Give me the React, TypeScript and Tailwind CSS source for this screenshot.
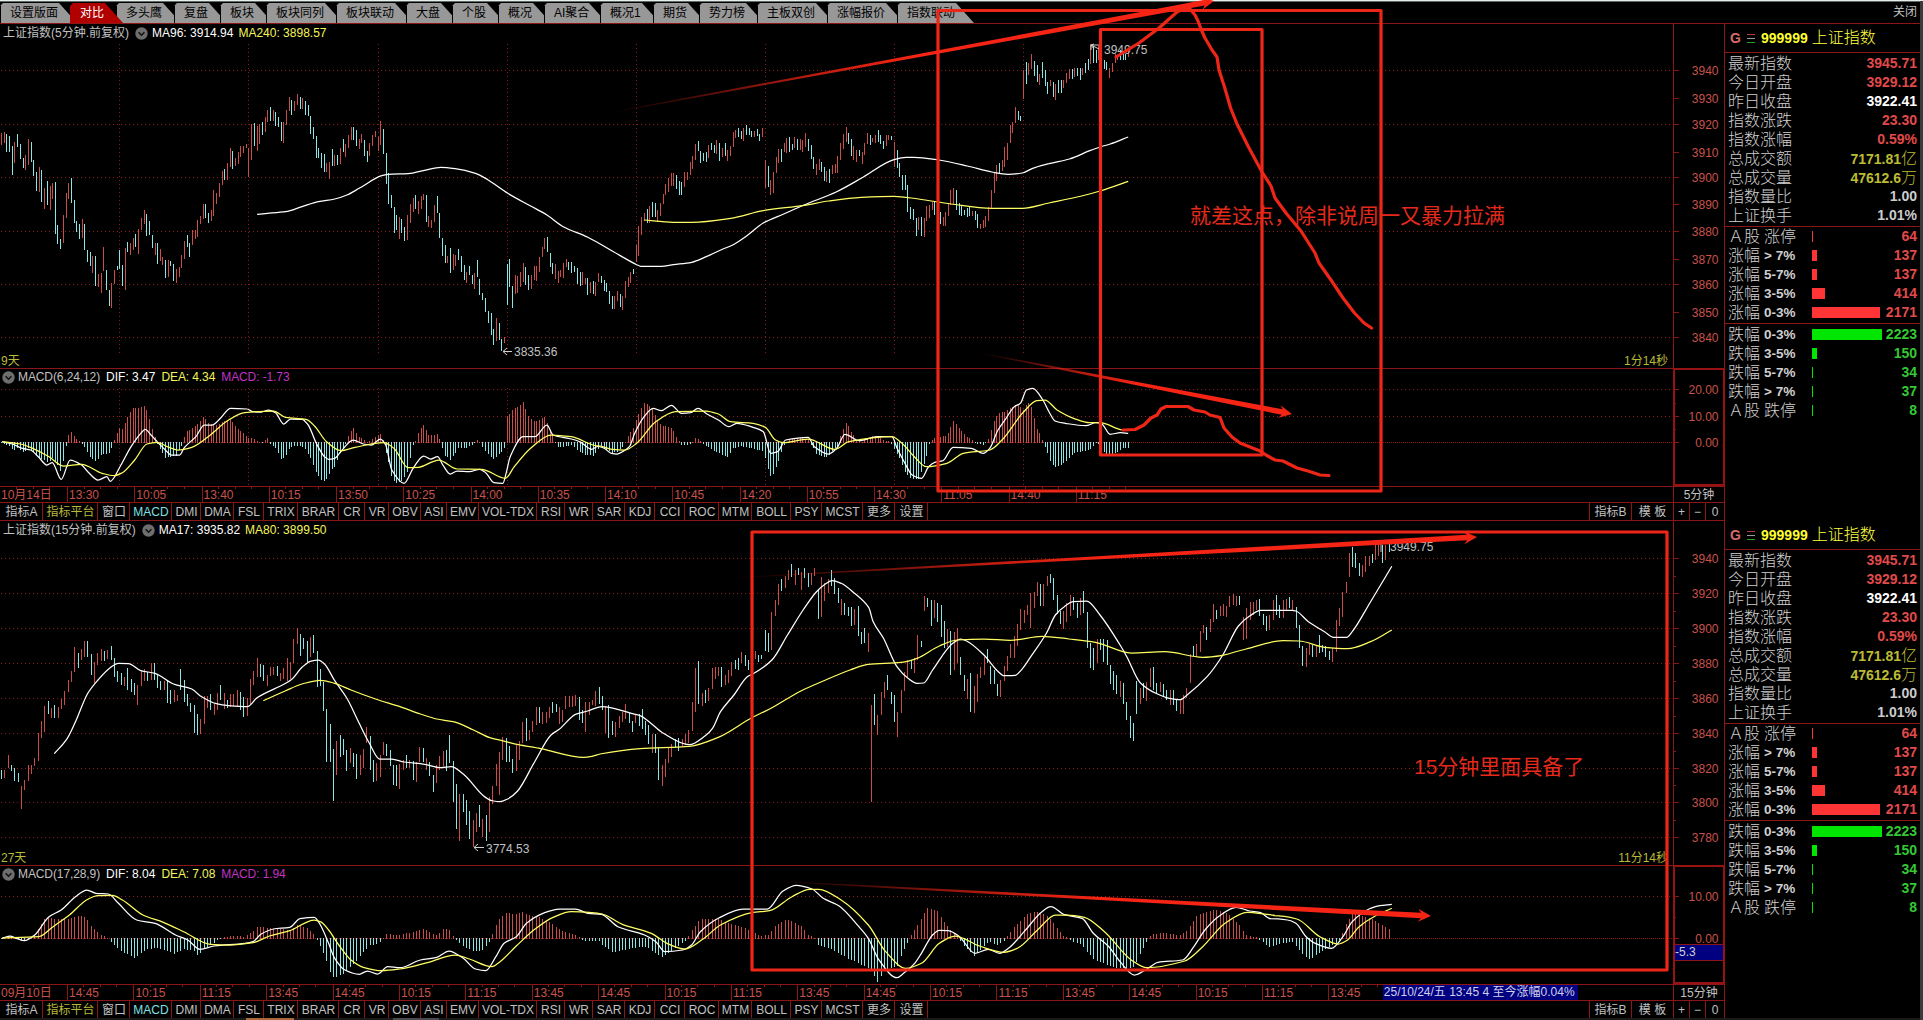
import React from "react";

const FONT = "font-['Liberation_Sans','Noto_Sans_CJK_SC',sans-serif]";
const RED = "#c94e49";
const CYAN = "#8ae6e6";
const LINE = "#8c1616";

/* ---------- chart data ---------- */

// A block of samples: origin, units per pixel and the samples themselves.
type Block = { ox: number; oy: number; kx: number; ky: number; data: string };
type Bar = { x: number; top: number; bottom: number; color: string };
type Pt = [number, number];

const A = { ox: 0, oy: 0, kx: 2.45, ky: 3 };
const B = { ox: 600, oy: 0, kx: 2.45, ky: 3 };
const AM = { ox: 0, oy: 340, kx: 2.45, ky: 3 };
const BM = { ox: 600, oy: 340, kx: 2.45, ky: 3 };
const C = { ox: 0, oy: 510, kx: 2.45, ky: 3 };
const D = { ox: 600, oy: 510, kx: 2.24, ky: 3 };
const E = { ox: 1200, oy: 510, kx: 2.1687, ky: 3 };

const toBars = (blocks: Block[]): Bar[] =>
  blocks.flatMap((b) =>
    b.data.split(";").map((s) => {
      const [x, t, bt, c] = s.trim().split(" ");
      return {
        x: Math.floor(b.ox + +x / b.kx),
        top: Math.round(b.oy + +t / b.ky),
        bottom: Math.round(b.oy + +bt / b.ky),
        color: c === "r" ? RED : CYAN,
      };
    })
  );

const toPts = (blocks: Block[]): Pt[] =>
  blocks.flatMap((b) =>
    b.data.split(" ").map((s) => {
      const [x, y] = s.split(",");
      return [b.ox + +x / b.kx, b.oy + +y / b.ky] as Pt;
    })
  );

// Histogram keyframes are offsets from the zero line, sampled at every bar.
const toHist = (blocks: Block[], bars: Bar[]): Pt[] => {
  const keys = blocks.flatMap((b) =>
    b.data.split(",").map((s) => {
      const [x, v] = s.split(":");
      return [b.ox + +x / b.kx, +v / b.ky] as Pt;
    })
  );
  const out: Pt[] = [];
  const last = keys[keys.length - 1][0];
  for (const { x } of bars) {
    if (x > last + 2) continue;
    const i = keys.findIndex((k) => k[0] >= x);
    if (i <= 0) {
      out.push([x, i === 0 ? keys[0][1] : keys[keys.length - 1][1]]);
      continue;
    }
    const [x0, v0] = keys[i - 1];
    const [x1, v1] = keys[i];
    out.push([x, v0 + ((v1 - v0) * (x - x0)) / (x1 - x0 || 1)]);
  }
  return out;
};

const bars5 = toBars([
  { ...A, data: "4 398 434 r;11 396 430 r;17 402 456 c;24 407 456 c;31 437 525 c;36 426 488 r;43 402 440 c;50 432 477 c;57 474 503 c;63 465 510 r;70 417 495 r;77 425 486 c;83 480 527 c;90 515 573 c;97 501 575 r;102 510 605 c;109 563 627 r;116 543 615 c;123 558 630 r;129 549 597 r;136 546 702 c;142 675 733 c;149 717 747 c;156 645 728 r;163 579 654 r;168 549 597 r;175 534 609 c;183 599 669 c;188 663 696 c;195 672 717 c;202 657 714 r;208 672 750 c;215 749 786 c;222 756 797 c;227 768 819 r;235 768 858 c;242 822 862 r;249 819 879 r;254 741 812 r;262 810 870 c;268 870 918 c;273 850 924 r;281 810 852 r;288 797 810 c;293 750 806 c;300 795 858 c;307 744 870 r;313 726 756 c;320 730 765 r;327 714 750 r;332 702 741 c;340 687 763 r;347 654 690 r;354 630 672 r;360 642 708 c;366 663 705 c;374 705 745 c;380 729 765 r;386 729 792 c;393 748 783 r;398 770 796 r;405 780 834 c;413 780 831 r;418 783 798 c;425 792 843 c;432 807 849 r;440 801 831 r;445 765 804 r;452 723 777 r;459 705 741 c;464 729 771 c;472 690 735 r;478 690 717 r;484 660 711 r;491 648 672 r;498 612 657 r;504 612 654 c;511 640 670 c;518 630 663 r;523 570 648 r;531 580 612 r;538 549 591 r;545 513 555 r;550 507 540 c;557 489 540 r;564 444 501 r;570 454 507 c;577 475 498 r;584 456 492 r;590 438 471 r;597 438 459 r;603 432 444 r;609 444 531 r;616 372 480 r;623 369 438 c;631 378 453 r;636 372 432 r;643 366 405 c;650 351 396 r;656 330 366 r;662 321 363 c;670 330 363 r;675 336 378 c;682 351 381 c;689 366 424 c;695 366 429 r;702 330 375 r;709 291 333 r;714 300 345 c;721 303 333 r;729 282 315 r;736 291 327 c;741 294 327 r;748 303 345 c;755 315 348 c;760 348 402 c;768 381 417 c;775 408 474 c;780 444 474 c;787 459 504 c;796 462 516 c;800 490 516 r;807 486 537 r;814 447 498 c;820 465 498 r;827 465 495 c;834 444 492 r;841 417 456 c;846 432 472 r;853 405 444 r;860 381 420 r;866 381 420 c;873 390 437 c;880 417 447 r;886 402 430 r;892 420 468 c;900 453 486 c;906 429 468 r;913 405 437 r;919 393 411 r;927 410 453 r;932 363 435 r;939 387 462 c;946 459 552 c;951 519 612 c;959 585 624 c;966 621 699 c;972 645 690 c;978 651 717 r;984 657 699 c;991 681 723 c;998 645 720 r;1005 612 669 r;1012 594 636 r;1018 585 627 c;1025 603 642 r;1032 588 627 r;1037 582 600 r;1045 585 666 c;1051 648 681 r;1057 660 684 r;1064 615 666 r;1071 588 639 c;1077 639 714 c;1084 714 768 c;1091 735 789 c;1097 768 789 r;1103 744 819 c;1110 762 810 r;1117 765 798 r;1123 747 780 c;1130 768 816 c;1137 795 840 c;1143 816 849 r;1150 798 825 c;1157 825 852 c;1163 819 867 r;1170 780 831 c;1176 837 885 c;1182 879 900 c;1189 894 936 c;1197 933 969 c;1204 939 1006 c;1209 987 1035 c;1216 954 1023 r;1223 969 1020 c;1228 1018 1052 c;1236 1012 1029 r;1244 792 915 c;1248 777 860 c;1256 858 924 c;1263 825 882 r;1268 828 880 r;1275 816 861 r;1282 789 847 r;1288 801 855 c;1295 826 870 c;1302 826 867 r;1309 798 840 r;1314 798 843 r;1321 771 816 r;1328 741 770 r;1334 714 747 r;1341 711 756 c;1348 759 801 c;1354 789 822 c;1361 792 838 r;1368 813 850 r;1374 810 830 r;1380 789 834 r;1388 777 801 r;1394 786 810 c;1400 786 819 c;1407 798 816 c;1415 804 852 c;1421 816 858 c;1427 816 855 r;1434 834 853 r;1440 834 885 c;1447 846 879 r;1453 843 882 c;1459 846 888 r;1467 819 846 r;1473 828 848 c;1480 840 872 c;1486 850 876 c;1493 873 912 c;1500 888 927 c;1506 888 927 r;1513 873 903 r;1520 882 921 c;1525 888 930 r;1532 843 894 r;1540 831 860 r;1545 816 850 r;1552 807 822 c" },
  { ...B, data: "90 735 786 r;95 678 768 r;102 651 705 r;109 640 664 r;116 627 669 c;121 618 668 r;129 606 650 c;136 609 652 c;141 630 666 r;148 609 647 r;155 582 612 r;160 552 585 r;168 534 576 r;175 519 558 r;180 519 558 r;187 525 567 c;195 543 585 c;200 546 585 c;207 516 561 r;214 516 540 r;221 486 525 r;227 468 507 r;234 432 480 r;241 423 454 c;246 453 489 c;253 459 483 c;261 456 486 c;267 435 474 r;273 429 450 c;280 435 460 c;285 420 462 r;292 429 483 c;300 444 471 r;307 429 468 c;312 450 483 r;319 438 468 r;327 396 441 r;332 390 414 r;340 384 411 c;346 393 417 c;351 385 423 r;359 375 405 c;366 384 405 c;371 393 410 c;378 393 410 r;385 388 408 c;391 402 424 c;398 384 411 r;405 480 564 r;412 498 561 c;417 540 585 r;425 516 578 r;432 471 519 r;437 447 490 r;444 447 486 c;451 429 456 r;457 414 460 r;464 411 456 c;471 432 450 c;477 411 444 r;484 417 450 c;491 417 450 r;497 420 456 r;503 399 441 r;511 417 454 c;518 435 477 c;523 471 507 c;530 492 525 r;537 477 510 r;543 486 516 c;550 501 543 c;556 513 546 r;562 507 549 c;569 495 522 r;576 492 518 r;583 468 519 r;589 429 480 r;596 402 447 r;603 381 426 r;608 399 432 c;615 417 468 c;622 438 480 r;628 450 485 r;635 450 468 c;643 456 492 r;648 429 465 r;655 399 432 r;662 405 435 c;668 414 426 r;675 405 429 r;682 390 426 c;688 405 433 c;694 423 447 c;701 406 438 r;707 404 420 r;713 408 420 c;721 426 500 r;729 450 504 c;734 490 530 c;740 525 570 c;748 525 570 c;754 555 636 c;760 621 658 c;768 627 660 c;775 654 708 c;780 651 690 r;787 651 708 c;795 654 711 r;800 618 662 r;807 615 654 r;814 606 630 r;820 606 645 c;828 630 668 r;835 636 672 c;841 651 678 r;846 636 678 r;853 609 648 r;859 570 615 r;866 564 612 r;873 570 630 c;880 609 645 c;886 618 648 c;892 630 645 c;900 624 651 c;905 618 648 c;912 633 648 r;919 633 660 c;925 643 684 c;932 672 687 r;939 660 685 r;944 648 681 r;952 621 664 r;959 570 627 r;966 516 580 r;972 495 543 r;979 489 520 c;986 480 513 r;992 441 500 r;998 429 480 r;1005 375 430 r;1010 366 398 r;1018 321 369 r;1025 333 360 c;1030 348 363 c;1037 210 297 r;1045 186 252 c;1050 189 225 r;1057 162 207 r;1064 184 228 c;1071 195 246 c;1077 222 255 r;1084 186 235 c;1091 210 258 c;1096 246 282 c;1103 240 258 r;1111 246 290 c;1116 252 300 r;1123 240 279 c;1130 240 280 c;1136 240 264 r;1143 219 250 r;1150 207 237 r;1157 207 237 c;1163 204 232 r;1170 204 228 c;1177 204 240 c;1182 204 225 r;1189 189 219 c;1197 177 210 c;1201 132 192 r;1208 138 190 c;1216 150 188 c;1222 138 180 r;1229 156 186 c;1236 180 207 c;1242 186 210 c;1249 204 234 r;1256 189 216 r;1262 162 189 r;1268 165 180 r;1275 150 180 c;1282 156 180 c;1288 162 180 c;1295 150 171 r" },
]);

const bars15 = toBars([
  { ...C, data: "4 780 807 c;11 780 804 r;21 735 775 r;28 765 783 c;36 774 813 c;45 789 816 c;53 828 897 r;60 810 839 r;70 765 813 r;77 765 792 r;85 743 768 r;95 669 753 r;102 633 683 r;110 588 666 r;119 573 612 c;126 594 625 r;134 585 624 c;143 591 625 r;151 567 597 r;158 543 585 r;168 510 546 r;175 483 517 r;183 411 486 r;192 429 474 c;200 417 450 r;208 393 440 r;215 393 440 c;223 432 495 c;232 456 520 r;239 429 465 r;248 417 452 r;256 423 453 c;263 420 447 r;273 408 450 c;281 444 501 c;288 483 515 c;298 489 525 c;305 501 528 r;313 474 540 c;322 507 546 c;330 519 555 c;337 525 585 r;347 483 528 r;354 477 513 r;362 485 513 c;371 459 510 r;378 459 510 c;386 495 534 c;393 513 540 c;403 513 540 r;410 513 580 c;418 540 582 c;427 540 576 r;435 555 573 r;442 477 540 c;452 510 575 c;459 552 588 c;466 579 607 c;476 585 669 c;484 612 675 c;491 627 672 r;501 558 642 r;508 558 595 r;515 552 600 c;525 582 615 r;532 549 600 r;540 525 570 c;550 549 598 r;557 570 595 c;564 552 590 r;573 552 588 r;582 540 588 r;589 546 600 c;597 561 620 c;606 564 618 r;613 507 582 r;621 483 524 r;631 444 500 r;638 462 501 c;645 465 512 c;655 495 528 r;663 471 497 r;670 471 495 r;680 468 498 c;687 489 513 r;695 474 507 r;704 444 513 r;711 456 507 r;719 387 459 r;729 354 402 r;736 372 438 c;743 384 418 c;753 393 456 c;760 381 440 r;768 375 430 c;778 423 530 c;785 477 528 c;793 516 602 c;800 597 755 c;809 642 755 c;817 717 873 c;824 693 795 r;833 675 740 c;841 687 735 c;849 720 783 c;858 714 760 r;866 729 770 c;873 732 807 c;882 735 795 r;890 717 775 r;898 651 700 r;907 678 780 c;915 750 816 c;922 759 813 r;932 735 801 r;939 696 735 r;947 702 738 c;956 720 768 c;964 765 825 c;971 765 828 c;979 762 837 r;988 750 780 r;996 735 775 c;1003 750 775 r;1013 753 810 c;1020 756 816 r;1028 711 755 r;1037 714 755 c;1045 745 780 r;1052 756 798 c;1062 795 846 c;1070 765 819 r;1077 738 780 r;1086 723 768 r;1094 720 783 c;1101 675 760 c;1111 753 876 c;1118 822 957 c;1126 852 993 r;1135 852 906 c;1143 870 945 c;1150 903 987 c;1160 930 1012 r;1167 909 966 r;1175 885 950 c;1182 927 982 r;1192 915 993 c;1199 861 966 r;1206 828 882 r;1216 763 828 r;1224 726 855 r;1231 681 750 r;1241 684 755 c;1248 708 757 c;1256 747 790 c;1265 705 783 r;1273 693 750 r;1280 636 700 r;1290 624 693 c;1297 660 690 r;1305 633 667 r;1314 591 645 r;1322 591 640 c;1330 606 642 r;1338 606 640 r;1346 591 625 r;1353 576 610 c;1363 582 606 c;1370 591 642 r;1378 600 636 r;1386 558 597 r;1395 558 590 r;1403 558 590 r;1410 555 588 r;1420 561 630 c;1427 600 640 c;1434 576 666 r;1444 576 615 r;1451 570 585 r;1459 543 588 r;1468 531 582 c;1475 558 594 c" },
  { ...D, data: "5 558 600 c;12 588 670 r;20 585 684 c;28 633 675 c;34 636 682 r;43 618 655 r;50 606 637 r;57 582 627 r;65 609 640 c;73 633 666 c;80 615 640 r;88 612 648 c;95 597 657 c;102 633 675 c;109 645 703 c;117 672 730 r;124 672 730 c;131 714 810 c;140 765 828 r;147 747 800 r;154 711 760 r;161 702 740 r;169 687 712 c;176 684 723 c;184 687 708 r;191 672 705 r;198 660 700 r;207 576 663 r;214 474 606 r;221 453 582 c;229 549 588 r;236 540 580 c;243 534 572 r;252 474 536 r;259 471 507 r;266 471 498 r;272 471 531 c;281 495 525 r;288 480 518 r;295 456 498 r;304 450 478 c;310 444 480 c;317 426 459 r;326 435 468 c;333 450 480 c;341 438 465 r;348 423 447 r;355 435 456 c;362 435 447 c;371 360 423 c;377 369 426 c;384 306 420 r;393 270 318 r;400 222 285 r;406 207 243 c;415 198 234 r;422 180 210 r;429 162 200 c;438 180 225 r;445 174 195 c;451 186 240 r;458 174 204 c;467 189 231 c;474 189 226 r;481 174 198 r;489 240 327 c;496 201 320 r;503 219 273 r;511 207 249 r;518 180 228 c;525 204 252 c;534 234 280 c;541 267 315 r;548 279 315 c;556 291 318 c;563 291 348 c;570 297 345 r;578 288 378 c;585 366 402 c;592 354 400 c;601 369 426 r;608 585 875 r;615 552 645 c;621 615 675 r;630 546 615 r;637 516 565 r;644 495 540 c;652 546 582 c;660 555 636 c;666 606 682 r;675 540 608 r;682 486 543 r;689 450 500 r;697 450 477 c;704 444 489 r;711 375 450 r;720 393 411 c;727 258 303 r;733 264 290 c;742 270 348 c;749 270 325 r;756 280 336 c;765 285 381 c;772 333 415 c;779 357 411 r;786 363 495 c;793 366 480 r;801 354 460 r;808 441 495 c;816 495 543 c;823 507 567 r;830 489 606 c;838 528 609 r;845 492 576 r;852 471 504 r;861 441 495 r;868 417 460 c;875 468 522 c;883 480 522 c;890 522 558 c;897 510 561 r;906 468 513 r;913 438 483 r;920 402 444 r;928 378 444 r;935 342 408 r;942 297 360 r;951 300 340 r;957 285 315 r;964 249 354 r;973 246 294 r;980 216 258 r;987 222 288 c;994 222 288 r;1002 198 228 r;1009 192 219 c;1016 204 270 c;1025 255 312 c;1031 303 342 c;1038 303 357 r;1046 279 336 r;1053 255 318 r;1061 261 300 c;1069 279 325 c;1076 264 315 r;1083 243 309 c;1092 306 415 c;1098 400 475 c;1105 414 480 c;1114 387 459 r;1121 387 420 c;1128 387 456 c;1136 390 465 c;1143 465 522 c;1150 483 540 c;1157 495 553 c;1166 513 560 r;1173 519 582 c;1180 576 630 c;1188 618 684 c;1195 639 693 c;1202 513 612 c;1211 534 582 r;1217 519 565 c;1224 516 573 r;1233 474 530 r;1240 471 540 c;1247 519 549 c;1255 516 545 r;1262 522 561 c;1269 540 570 c;1278 540 585 r;1285 540 585 c;1291 567 603 c;1300 570 612 r;1307 555 612 r;1314 534 564 r;1323 432 519 r;1330 408 438 c;1336 402 440 r;1345 363 426 r;1352 345 369 r;1359 351 390 c;1367 327 366 r;1374 282 336 r;1381 300 327 c;1389 288 318 r;1397 282 318 r;1404 288 321 r;1411 258 291 r;1420 252 285 r;1426 258 288 r;1433 258 285 c;1441 321 390 r;1448 294 387 r;1456 276 330 r;1464 276 315 r;1471 270 300 r;1478 267 318 c;1487 312 345 c;1494 318 363 c;1500 315 360 r;1508 270 330 r;1516 255 315 c;1523 285 325 c;1530 270 325 r;1538 267 300 r;1545 260 295 c;1552 270 303 r;1560 290 355 c" },
  { ...E, data: "216 345 415 c;222 408 468 c;231 414 471 r;238 402 435 r;244 405 441 c;252 405 441 r;259 375 429 c;266 405 426 c;273 408 440 c;281 423 450 c;287 414 456 r;296 330 426 r;302 294 348 r;309 246 321 r;318 216 249 r;324 129 201 r;331 111 170 c;338 129 175 c;346 159 198 c;352 165 201 r;359 138 186 r;367 138 168 r;374 132 160 c;381 90 150 r;388 102 138 r;396 105 159 c;403 105 150 r;411 102 125 c" },
]);

const ma5w = toPts([
  { ...A, data: "630,643 655,640 700,635 740,620 780,605 820,597 850,585 880,565 935,527 950,523 1000,521 1040,511 1080,502 1115,506 1165,520 1195,539 1244,580 1300,618 1340,645 1380,680 1440,712 1500,753 1560,794" },
  { ...B, data: "100,799 150,799 180,794 225,787 260,770 300,748 325,735 360,707 400,669 450,642 500,615 580,575 640,535 720,479 750,472 770,472 830,480 900,498 960,516 1000,523 1035,519 1060,505 1100,491 1150,477 1200,452 1225,441 1250,432 1294,411" },
]);
const ma5y = toPts([
  { ...B, data: "108,660 180,667 225,667 320,655 400,632 500,616 560,603 640,592 720,589 780,597 860,612 960,625 1035,625 1100,609 1180,588 1225,573 1294,544" },
]);
const dif5 = toPts([
  { ...AM, data: "5,305 30,312 55,325 75,330 95,352 115,375 128,368 150,418 172,360 200,375 215,395 240,420 262,410 270,424 295,378 320,322 345,280 356,268 370,285 385,305 405,330 420,345 440,345 452,322 480,290 500,255 520,255 540,235 565,205 605,207 620,215 640,216 658,210 675,218 695,252 712,237 740,238 755,255 775,310 795,350 805,358 820,355 835,335 865,300 890,312 910,315 932,297 945,315 960,390 990,430 1012,385 1038,348 1055,357 1072,350 1085,375 1103,402 1120,393 1150,395 1175,388 1190,398 1210,428 1232,430 1240,400 1250,350 1282,290 1310,290 1340,255 1355,285 1400,297 1420,305 1450,328 1465,319" },
  { ...BM, data: "10,325 28,340 42,342 55,335 72,320 85,280 105,235 130,205 150,212 175,196 200,220 222,218 240,205 262,222 290,240 316,260 335,250 375,262 400,275 418,340 435,335 455,300 510,292 525,320 560,342 580,325 600,283 635,302 680,290 715,290 728,325 745,365 765,405 788,415 805,380 820,367 840,362 865,322 910,325 938,340 955,325 975,270 995,235 1015,200 1030,190 1045,150 1060,145 1085,180 1100,215 1115,243 1140,250 1190,257 1215,248 1228,250 1250,283 1275,278 1294,280" },
]);
const dea5 = toPts([
  { ...AM, data: "5,305 50,312 80,325 120,350 155,378 200,373 250,400 280,407 300,398 330,360 360,312 385,307 410,320 435,330 470,322 510,290 560,240 600,218 670,213 700,232 750,238 770,257 800,305 835,332 870,322 940,308 965,325 1000,383 1025,382 1075,360 1120,387 1180,388 1238,415 1260,380 1300,325 1350,285 1400,290 1460,317" },
  { ...BM, data: "0,318 30,328 60,330 90,310 135,247 185,215 260,213 290,222 320,245 375,250 405,262 430,300 450,308 510,297 575,328 610,305 715,290 740,310 770,350 800,380 850,370 890,340 955,330 985,300 1035,220 1070,182 1090,180 1120,210 1160,235 1200,248 1225,248 1280,270 1294,271" },
]);
const hist5 = toHist(
  [
    { ...AM, data: "4:0,24:-10,31:-22,43:-14,57:-28,70:-15,83:-30,97:-48,109:-50,118:-60,129:-42,142:-70,149:-88,156:-45,163:-2,164:20,175:30,188:5,200:0,208:-15,222:-45,235:-55,249:-35,268:-30,276:0,281:10,293:45,300:38,313:80,327:104,340:100,354:110,366:65,375:30,386:-6,400:-35,405:-45,418:-40,432:-38,445:-5,452:20,459:34,478:48,498:75,511:55,531:50,550:65,564:68,577:45,590:32,609:12,616:12,640:-3,654:12,660:0,675:-15,689:-50,700:-38,710:-12,735:-8,748:-20,760:-45,775:-90,787:-112,796:-113,807:-90,820:-68,834:-28,845:-3,853:20,864:42,880:15,900:0,913:10,932:25,940:0,946:-30,959:-105,970:-120,985:-112,998:-85,1010:-10,1018:6,1025:30,1037:53,1050:18,1071:25,1080:-8,1091:-40,1103:-50,1117:-25,1123:-12,1140:-16,1160:-2,1170:6,1178:-6,1190:-28,1209:-50,1222:-35,1236:-14,1240:75,1244:80,1256:100,1270:105,1282:120,1290:82,1310:60,1334:75,1345:45,1356:6,1368:-14,1400:-6,1415:-22,1430:-34,1453:-38,1468:-15" },
    { ...BM, data: "0:-8,28:-30,45:-25,60:-3,70:22,82:45,95:92,108:118,121:108,130:96,141:60,155:48,175:42,188:10,200:-8,222:-4,235:14,250:-2,265:-12,285:-28,312:-42,325:-15,345:-10,365:-15,385:-20,400:-25,410:-70,418:-105,428:-85,440:-38,450:-8,460:8,490:12,510:8,520:-12,530:-35,557:-44,570:-22,583:-8,590:28,603:57,613:35,625:8,640:0,660:15,680:20,690:5,710:3,722:-20,735:-50,750:-95,762:-108,780:-108,795:-60,805:-6,815:10,830:15,850:18,860:55,866:66,880:40,900:15,920:-2,940:-6,950:8,960:45,972:85,990:90,1010:105,1022:115,1035:95,1048:118,1058:100,1070:40,1082:10,1092:-18,1103:-55,1115:-72,1130:-65,1145:-50,1160:-30,1180:-25,1196:-22,1215:0,1225:-8,1240:-35,1249:-42,1265:-28,1280:-16,1295:-14" },
  ],
  bars5
);

const ma15w = toPts([
  { ...C, data: "133,731 165,685 185,635 215,550 240,510 270,473 290,460 315,461 345,482 380,490 425,522 470,537 490,557 530,581 560,587 606,590 630,563 700,520 715,508 740,472 760,454 780,450 795,462 820,512 850,565 880,640 905,700 930,747 960,747 990,756 1040,763 1080,773 1105,770 1135,792 1185,858 1205,872 1225,875 1245,866 1268,843 1310,755 1350,675 1370,658 1410,613 1440,603 1465,592" },
  { ...D, data: "5,590 70,610 90,617 110,635 140,668 200,704 235,678 252,655 270,605 300,555 330,500 345,490 385,450 420,375 455,300 485,245 505,222 520,212 540,220 570,250 602,293 612,335 635,385 665,470 690,505 710,520 725,519 745,480 790,400 808,387 820,392 860,435 890,482 905,497 930,496 945,478 965,440 1000,370 1020,315 1040,290 1060,275 1090,273 1120,315 1165,405 1180,440 1210,518 1245,550 1275,565 1300,569 1315,555 1360,500 1395,435 1430,348 1455,318 1480,301 1550,301" },
  { ...E, data: "208,303 235,335 270,365 290,382 318,382 330,365 370,275 416,169" },
]);
const ma15y = toPts([
  { ...C, data: "645,572 700,542 740,522 785,511 820,520 860,540 920,567 980,590 1030,612 1070,627 1110,635 1160,660 1200,683 1230,692 1270,704 1325,716 1430,742 1450,739" },
  { ...D, data: "0,732 90,716 200,709 265,682 340,623 380,597 450,543 500,513 560,480 600,463 675,457 710,445 760,408 800,390 860,387 920,391 990,379 1050,387 1110,397 1190,429 1265,425 1350,442 1395,436" },
  { ...E, data: "55,434 100,417 180,392 215,393 270,412 320,416 370,395 416,360" },
]);
const dif15 = toPts([
  { ...C, data: "5,1285 25,1278 40,1285 60,1292 85,1275 120,1220 150,1200 185,1160 213,1140 235,1150 265,1152 290,1180 335,1230 380,1240 430,1275 460,1290 490,1318 525,1308 600,1300 620,1295 640,1272 670,1257 710,1252 735,1226 770,1222 785,1245 805,1300 820,1345 845,1380 880,1393 900,1383 925,1392 950,1370 980,1373 1030,1350 1070,1342 1100,1323 1135,1345 1165,1377 1190,1382 1215,1340 1235,1300 1265,1280 1290,1240 1330,1210 1370,1197 1410,1197 1440,1210" },
  { ...D, data: "3,1213 40,1250 100,1275 125,1295 145,1325 185,1320 205,1305 225,1265 265,1225 320,1197 375,1197 410,1143 440,1126 475,1137 500,1165 535,1187 580,1250 601,1285 625,1350 665,1403 680,1390 705,1360 720,1330 745,1275 760,1261 780,1262 805,1280 840,1330 870,1318 895,1330 915,1315 950,1265 990,1205 1010,1190 1040,1214 1080,1225 1105,1270 1140,1310 1165,1355 1197,1395 1225,1377 1250,1357 1305,1350 1330,1310 1355,1260 1385,1220 1425,1192 1455,1203 1480,1208 1500,1225" },
  { ...E, data: "150,1226 190,1230 208,1240 230,1280 250,1300 285,1315 310,1280 330,1235 370,1195 390,1187 416,1183" },
]);
const dea15 = toPts([
  { ...C, data: "5,1284 95,1280 130,1250 170,1215 215,1168 240,1157 275,1156 300,1170 350,1215 400,1237 450,1265 515,1303 560,1305 620,1298 660,1278 710,1262 770,1230 785,1235 805,1260 830,1305 860,1350 890,1372 935,1382 980,1377 1050,1357 1115,1335 1150,1347 1205,1370 1225,1355 1265,1308 1310,1258 1355,1222 1400,1205 1450,1208" },
  { ...D, data: "5,1212 50,1243 115,1270 150,1300 190,1317 230,1288 270,1245 340,1208 380,1202 430,1160 470,1138 490,1138 540,1170 601,1245 640,1325 685,1375 720,1360 760,1300 795,1278 850,1308 905,1327 935,1315 980,1260 1020,1215 1045,1215 1085,1222 1130,1265 1190,1350 1225,1373 1310,1353 1350,1310 1400,1240 1450,1207 1510,1215" },
  { ...E, data: "160,1217 210,1227 260,1280 300,1302 320,1290 345,1250 380,1218 416,1195" },
]);
const hist15 = toHist(
  [
    { ...C, data: "4:0,21:6,40:0,57:-6,70:0,85:8,95:30,110:60,130:58,168:58,190:66,208:64,223:35,239:16,256:4,270:-5,281:-20,298:-38,330:-58,345:-42,362:-30,386:-26,427:-44,450:-30,476:-35,484:-50,500:-28,525:-12,532:-3,560:5,575:8,597:3,613:15,631:33,650:32,665:28,710:25,729:40,753:30,768:10,778:-5,793:-45,809:-100,817:-117,840:-105,866:-75,890:-38,907:-18,922:-16,935:-4,947:14,965:8,988:12,1010:18,1037:28,1052:16,1068:8,1086:28,1101:24,1111:4,1130:-18,1160:-38,1185:-32,1200:-4,1206:15,1224:60,1241:75,1262:70,1280:78,1300:65,1322:62,1350:45,1378:20,1410:8,1430:-6,1468:-6" },
    { ...D, data: "5:-20,30:-40,70:-28,100:-22,140:-55,160:-35,184:-12,193:-3,207:25,221:55,259:58,288:45,317:33,340:20,360:5,377:10,393:38,415:55,430:50,450:35,465:10,480:0,489:-18,520:-32,550:-55,585:-78,605:-90,621:-130,637:-92,666:-80,682:-25,692:-2,704:25,720:60,733:92,756:82,772:45,786:22,800:5,815:-20,838:-50,855:-28,870:-8,890:-18,905:-5,913:8,935:45,960:75,980:78,1000:68,1015:45,1035:8,1055:-6,1075:-15,1092:-40,1105:-62,1130:-75,1160:-88,1195:-85,1210:-45,1224:-5,1235:10,1262:16,1300:8,1315:22,1336:68,1360:80,1381:85,1404:75,1430:42,1445:10,1470:2,1487:-12,1500:-25,1530:-12,1550:-8" },
    { ...E, data: "208:-20,222:-45,238:-62,259:-42,281:-22,300:-8,305:5,318:45,330:75,350:68,374:55,400:35,416:22" },
  ],
  bars15
);

/* ---------- chart drawing ---------- */

// Cubic path through all points, with damped tangents so peaks do not overshoot.
const smooth = (pts: Pt[]) => {
  const n = (v: number) => v.toFixed(1);
  let d = `M${n(pts[0][0])} ${n(pts[0][1])}`;
  for (let i = 0; i < pts.length - 1; i++) {
    const p0 = pts[Math.max(0, i - 1)];
    const p1 = pts[i];
    const p2 = pts[i + 1];
    const p3 = pts[Math.min(pts.length - 1, i + 2)];
    const w = (p2[0] - p1[0]) / 3;
    const slope = (a: Pt, b: Pt, c: Pt) => {
      const l = (b[1] - a[1]) / (b[0] - a[0] || 1);
      const r = (c[1] - b[1]) / (c[0] - b[0] || 1);
      return l * r <= 0 ? 0 : (2 * l * r) / (l + r);
    };
    const m1 = i === 0 ? (p2[1] - p1[1]) / (p2[0] - p1[0]) : slope(p0, p1, p2);
    const m2 = i === pts.length - 2 ? (p2[1] - p1[1]) / (p2[0] - p1[0]) : slope(p1, p2, p3);
    d += `C${n(p1[0] + w)} ${n(p1[1] + m1 * w)} ${n(p2[0] - w)} ${n(p2[1] - m2 * w)} ${n(p2[0])} ${n(p2[1])}`;
  }
  return d;
};

const Curve = ({ pts, color }: { pts: Pt[]; color: string }) => (
  <path d={smooth(pts)} fill="none" stroke={color} strokeWidth="1.25" strokeLinejoin="round" />
);

type ChartSpec = {
  top: number;
  height: number;
  split: number;
  zero: number;
  price: { label: string; y: number; grid: boolean }[];
  macd: { label: string; y: number }[];
  minor: number[];
  verticals: number[];
  bars: Bar[];
  hist: Pt[];
  curves: { pts: Pt[]; color: string }[];
  children?: React.ReactNode;
};

const Chart = (c: ChartSpec) => {
  const bottom = c.top + c.height;
  return (
    <svg
      className={`absolute left-0 top-0 ${FONT} text-[12px]`}
      width={1725}
      height={c.height}
      viewBox={`0 ${c.top} 1725 ${c.height}`}
    >
      <g shapeRendering="crispEdges">
        {c.price
          .filter((p) => p.grid)
          .map((p) => (
            <line key={p.label} x1="1" x2="1672" y1={p.y + 0.5} y2={p.y + 0.5} stroke="#8c1a1a" strokeDasharray="1 3" />
          ))}
        {c.macd.map((p) => (
          <line
            key={p.label}
            x1="1"
            x2="1672"
            y1={p.y + 0.5}
            y2={p.y + 0.5}
            stroke="#8c1c1c"
            strokeDasharray={p.y === c.zero ? "1 1" : "1 3"}
          />
        ))}
        {c.verticals.map((x) => (
          <React.Fragment key={x}>
            <line x1={x + 0.5} x2={x + 0.5} y1={c.top + 20} y2={c.split - 15} stroke="#8c1a1a" strokeDasharray="1 3" />
            <line x1={x + 0.5} x2={x + 0.5} y1={c.split + 20} y2={bottom - 2} stroke="#8c1a1a" strokeDasharray="1 3" />
          </React.Fragment>
        ))}
        {c.bars.map((b, i) => (
          <rect key={i} x={b.x} y={b.top} width="1" height={Math.max(1, b.bottom - b.top)} fill={b.color} />
        ))}
        {c.hist.map(([x, v], i) => {
          const h = Math.round(Math.abs(v));
          return (
            <rect key={i} x={x} y={v > 0 ? c.zero - h : c.zero} width="1" height={h + 1} fill={v > 0 ? RED : CYAN} />
          );
        })}
        <line x1="0" x2="1725" y1={c.split + 0.5} y2={c.split + 0.5} stroke={LINE} />
        <line x1="0" x2="1725" y1={bottom - 0.5} y2={bottom - 0.5} stroke={LINE} />
        <line x1="1673.5" x2="1673.5" y1={c.top} y2={bottom} stroke={LINE} />
        <rect x="1674" y={c.split + 1} width="50" height={bottom - c.split - 3} fill="none" stroke="#981212" strokeWidth="2" />
        {[...c.price.map((p) => p.y), ...c.macd.map((p) => p.y)].map((y) => (
          <line key={y} x1="1674" x2="1679" y1={y + 0.5} y2={y + 0.5} stroke={LINE} />
        ))}
        {c.minor.map((y) => (
          <line key={y} x1="1674" x2="1676" y1={y + 0.5} y2={y + 0.5} stroke={LINE} />
        ))}
      </g>
      {c.curves.map((k, i) => (
        <Curve key={i} {...k} />
      ))}
      {[...c.price, ...c.macd].map((p) => (
        <text key={p.label} x="1718.5" y={p.y + 4.8} textAnchor="end" fill="#c8524c">
          {p.label}
        </text>
      ))}
      {c.children}
    </svg>
  );
};

const Chevron = () => (
  <svg className="shrink-0" width="13" height="13" viewBox="0 0 13 13">
    <circle cx="6.5" cy="6.5" r="6.2" fill="#6e6e6e" />
    <path d="M3.6 5.2 6.5 8.2 9.4 5.2" fill="none" stroke="#111" strokeWidth="1.5" />
  </svg>
);

const WHITE = "#ffffff";
const YELLOW = "#ffff64";

/* ---------- page parts ---------- */

const tabs = [
  ["设置版面", "w-[70px]"],
  ["对比", "w-[46px]"],
  ["多头鹰", "w-[58px]"],
  ["复盘", "w-[46px]"],
  ["板块", "w-[46px]"],
  ["板块同列", "w-[70px]"],
  ["板块联动", "w-[70px]"],
  ["大盘", "w-[46px]"],
  ["个股", "w-[46px]"],
  ["概况", "w-[46px]"],
  ["AI聚合", "w-[56px]"],
  ["概况1", "w-[53px]"],
  ["期货", "w-[46px]"],
  ["势力榜", "w-[58px]"],
  ["主板双创", "w-[70px]"],
  ["涨幅报价", "w-[70px]"],
  ["指数联动", "w-[70px]"],
];

const TabBar = () => (
  <div className="flex h-[22px] shrink-0 items-end justify-between border-b border-[#8c1616] bg-black text-[12px] leading-[21px]">
    <div className="flex h-[20px]">
      {tabs.map(([label, width]) => {
        const active = label === "对比";
        return (
          <div key={label} className={`relative shrink-0 ${width} ${active ? "z-10" : ""}`}>
            <div
              className={`h-[20px] w-[calc(100%+7px)] whitespace-nowrap [clip-path:polygon(0_3px,3px_0,calc(100%-18px)_0,100%_100%,0_100%)] ${
                active ? "bg-[#b00000] pl-[10px] text-white" : "border-l border-black bg-[#989898] pl-[9px] text-black"
              }`}
            >
              {label}
            </div>
          </div>
        );
      })}
    </div>
    <span className="pr-[3px] text-[#c0c0c0]">关闭</span>
  </div>
);

const indicators: [string, string][] = [
  ["指标A", "w-[43px]"],
  ["指标平台", "w-[55px]"],
  ["窗口", "w-[32px]"],
  ["MACD", "w-[42px]"],
  ["DMI", "w-[29px]"],
  ["DMA", "w-[33px]"],
  ["FSL", "w-[30px]"],
  ["TRIX", "w-[34px]"],
  ["BRAR", "w-[41px]"],
  ["CR", "w-[26px]"],
  ["VR", "w-[24px]"],
  ["OBV", "w-[32px]"],
  ["ASI", "w-[26px]"],
  ["EMV", "w-[32px]"],
  ["VOL-TDX", "w-[58px]"],
  ["RSI", "w-[28px]"],
  ["WR", "w-[28px]"],
  ["SAR", "w-[32px]"],
  ["KDJ", "w-[30px]"],
  ["CCI", "w-[30px]"],
  ["ROC", "w-[34px]"],
  ["MTM", "w-[33px]"],
  ["BOLL", "w-[39px]"],
  ["PSY", "w-[31px]"],
  ["MCST", "w-[41px]"],
  ["更多", "w-[32px]"],
  ["设置", "w-[33px]"],
];

const IndicatorBar = () => (
  <div className="flex h-[18px] justify-between border-b border-[#8c1616] text-center text-[12px] leading-[19px] text-[#c0c0c0]">
    <div className="flex">
      {indicators.map(([label, width]) => (
        <div
          key={label}
          className={`${width} h-[17px] shrink-0 overflow-hidden border-r border-[#8c1616] pl-px whitespace-nowrap ${
            label === "指标平台" ? "text-[#b9b93a]" : label === "MACD" ? "text-[#7fe0e0]" : ""
          }`}
        >
          {label}
        </div>
      ))}
    </div>
    <div className="flex h-[17px] border-l border-[#8c1616]">
      <div className="w-[42px] border-r border-[#8c1616]">指标B</div>
      <div className="w-[42px] border-r border-[#8c1616]">模 板</div>
      <div className="w-[16px] border-r border-[#8c1616]">+</div>
      <div className="w-[16px] border-r border-[#8c1616]">−</div>
      <div className="w-[18px]">0</div>
    </div>
  </div>
);

const TimeAxis = ({
  labels,
  step,
  first,
  period,
  cursor,
}: {
  labels: string[];
  step: string;
  first: string;
  period: string;
  cursor?: React.ReactNode;
}) => (
  <div className="flex h-[16px] border-b border-[#8c1616] text-[12px] leading-[17px] text-[#c8524c]">
    <div className="flex h-[15px] w-[1673px]">
      {labels.map((l, i) => (
        <div key={i} className={`relative shrink-0 ${i === 0 ? first : step} border-[#8c1616] pl-[1px] ${i ? "border-l" : ""}`}>
          <div className="absolute inset-x-0 top-0 flex h-[2px]">
            <i className="w-1/4 border-r border-[#8c1616]" />
            <i className="w-1/4 border-r border-[#8c1616]" />
            <i className="w-1/4 border-r border-[#8c1616]" />
          </div>
          {l}
        </div>
      ))}
      {cursor}
    </div>
    <div className="h-[15px] flex-1 border-l border-[#8c1616] text-center leading-[16px] text-[#c0c0c0]">{period}</div>
  </div>
);

const quotes: [string, string, string][] = [
  ["最新指数", "3945.71", "text-[#e04a4a]"],
  ["今日开盘", "3929.12", "text-[#e04a4a]"],
  ["昨日收盘", "3922.41", "text-white"],
  ["指数涨跌", "23.30", "text-[#e04a4a]"],
  ["指数涨幅", "0.59%", "text-[#e04a4a]"],
  ["总成交额", "7171.81亿", "text-[#bcbc34]"],
  ["总成交量", "47612.6万", "text-[#bcbc34]"],
  ["指数量比", "1.00", "text-[#cccccc]"],
  ["上证换手", "1.01%", "text-[#cccccc]"],
];

const ups: [string, string, number, string][] = [
  ["Ａ股", "涨停", 64, "w-px"],
  ["涨幅", "> 7%", 137, "w-[5px]"],
  ["涨幅", "5-7%", 137, "w-[5px]"],
  ["涨幅", "3-5%", 414, "w-[13px]"],
  ["涨幅", "0-3%", 2171, "w-[68px]"],
];
const downs: [string, string, number, string][] = [
  ["跌幅", "0-3%", 2223, "w-[70px]"],
  ["跌幅", "3-5%", 150, "w-[5px]"],
  ["跌幅", "5-7%", 34, "w-px"],
  ["跌幅", "> 7%", 37, "w-px"],
  ["Ａ股", "跌停", 8, "w-px"],
];

const Value = ({ text, cls }: { text: string; cls: string }) => {
  const unit = /[亿万]$/.test(text) ? text.slice(-1) : "";
  return (
    <span className={`${cls} text-[14px] font-bold`}>
      {unit ? text.slice(0, -1) : text}
      {unit && <span className="text-[16px] font-light">{unit}</span>}
    </span>
  );
};

const Breadth = ({ rows, bar, text }: { rows: [string, string, number, string][]; bar: string; text: string }) => (
  <>
    {rows.map(([a, b, n, w]) => {
      const cjk = b.endsWith("停");
      return (
        <div key={a + b} className="flex h-[19px] items-center pr-[3px] pl-[3px] leading-[19px]">
          <span className="w-[36px] text-[16px] font-light">{a}</span>
          <span className={`w-[48px] whitespace-nowrap ${cjk ? "text-[16px] font-light" : "text-[13.5px] font-bold"}`}>{b}</span>
          <span className={`h-[11px] ${w} ${bar}`} />
          <span className={`ml-auto text-[14px] font-bold ${text}`}>{n}</span>
        </div>
      );
    })}
  </>
);

const Quote = () => (
  <div className="w-[196px] shrink-0 border-l border-[#8c1616] text-[#d0d0d0]">
    <div className="flex h-[28px] items-center pl-[5px] leading-[28px]">
      <span className="w-[17px] text-[14px] font-bold text-[#d86a6a]">G</span>
      <span className="mr-[6px] flex w-[8px] flex-col gap-[3px]">
        <i className="h-px bg-[#b03a3a]" />
        <i className="h-px bg-[#9a9a9a]" />
        <i className="h-px bg-[#2aa02a]" />
      </span>
      <span className="mr-[4px] text-[14px] font-bold text-[#ffff30]">999999</span>
      <span className="text-[16px] font-light text-[#ffff40]">上证指数</span>
    </div>
    <div className="h-[174px] border-t border-[#8c1616] pt-[1px]">
      {quotes.map(([k, v, c]) => (
        <div key={k} className="flex h-[19px] items-center justify-between pr-[3px] pl-[3px] leading-[19px]">
          <span className="text-[16px] font-light">{k}</span>
          <Value text={v} cls={c} />
        </div>
      ))}
    </div>
    <div className="h-[97px] border-t border-[#8c1616]">
      <Breadth rows={ups} bar="bg-[#ff3434]" text="text-[#e04a4a]" />
    </div>
    <div className="border-t border-[#8c1616] pt-[1px]">
      <Breadth rows={downs} bar="bg-[#00e600]" text="text-[#34c834]" />
    </div>
  </div>
);

const Heading = ({ title, ma }: { title: string; ma: [string, string] }) => (
  <div className="flex h-[18px] items-center pl-[3px] text-[12px] leading-[18px] text-[#c0c0c0]">
    <span className="mr-[6px]">{title}</span>
    <Chevron />
    <span className="ml-[4px] text-white">{ma[0]}</span>
    <span className="ml-[5px] text-[#f5f55a]">{ma[1]}</span>
  </div>
);

const MacdHeading = ({ name, dif, dea, macd }: { name: string; dif: string; dea: string; macd: string }) => (
  <div className="flex h-[16px] items-center pl-[2px] text-[12px] leading-[16px] text-[#c0c0c0]">
    <Chevron />
    <span className="ml-[3px] tracking-[-0.1px]">{name}</span>
    <span className="ml-[6px] text-white">DIF: {dif}</span>
    <span className="ml-[6px] tracking-[-0.1px] text-[#f5f55a]">DEA: {dea}</span>
    <span className="ml-[6px] tracking-[-0.1px] text-[#c234c2]">MACD: {macd}</span>
  </div>
);

const Footer = ({ days, left }: { days: string; left: string }) => (
  <div className="flex w-[1668px] justify-between pl-px text-[12px] leading-[16px] text-[#b9b93a]">
    <span>{days}</span>
    <span>{left}</span>
  </div>
);

const step5 = ["10月14日", "13:30", "10:05", "13:40", "10:15", "13:50", "10:25", "14:00", "10:35", "14:10", "10:45", "14:20", "10:55", "14:30", "11:05", "14:40", "11:15"];
const step15 = ["09月10日", "14:45", "10:15", "11:15", "13:45", "14:45", "10:15", "11:15", "13:45", "14:45", "10:15", "11:15", "13:45", "14:45", "10:15", "11:15", "13:45", "14:45", "10:15", "11:15", "13:45"];

const price5 = [70, 98, 124, 152, 177, 204, 231, 259, 284, 312, 337].map((y, i) => ({
  label: String(3940 - i * 10),
  y,
  grid: i % 2 === 0,
}));
const price15 = [558, 593, 628, 663, 698, 733, 768, 802, 837].map((y, i) => ({
  label: String(3940 - i * 20),
  y,
  grid: true,
}));

const FiveMinute = () => (
  <section className="flex h-[497px] shrink-0">
    <div className="w-[1724px] shrink-0">
      <div className="relative h-[463px]">
        <Chart
          top={24}
          height={463}
          split={368}
          zero={442}
          price={price5}
          macd={[
            { label: "20.00", y: 389 },
            { label: "10.00", y: 416 },
            { label: "0.00", y: 442 },
          ]}
          minor={[403, 429]}
          verticals={[119, 248, 378, 507, 636, 765, 894, 1023]}
          bars={bars5}
          hist={hist5}
          curves={[
            { pts: ma5w, color: WHITE },
            { pts: ma5y, color: YELLOW },
            { pts: dif5, color: WHITE },
            { pts: dea5, color: YELLOW },
          ]}
        >
          <path d="M503 351.5H512M507 348 503 351.5 507 355" fill="none" stroke="#d0d0d0" />
          <text x="514" y="356" fill="#c0c0c0">3835.36</text>
          <path d="M1091 50V45H1099M1091 45 1101 50M1094 44 1091 45 1094 49" fill="none" stroke="#d0d0d0" />
          <text x="1104" y="54" fill="#c0c0c0">3949.75</text>
        </Chart>
        <div className="relative flex h-full flex-col">
          <div className="flex h-[345px] flex-col justify-between">
            <Heading title="上证指数(5分钟.前复权)" ma={["MA96: 3914.94", "MA240: 3898.57"]} />
            <Footer days="9天" left="1分14秒" />
          </div>
          <MacdHeading name="MACD(6,24,12)" dif="3.47" dea="4.34" macd="-1.73" />
        </div>
      </div>
      <TimeAxis labels={step5} first="w-[67px]" step="w-[67.25px]" period="5分钟" />
      <IndicatorBar />
    </div>
    <Quote />
  </section>
);

const FifteenMinute = () => (
  <section className="flex h-[497px] shrink-0">
    <div className="w-[1724px] shrink-0">
      <div className="relative h-[464px]">
        <Chart
          top={521}
          height={464}
          split={865}
          zero={938}
          price={price15}
          macd={[
            { label: "10.00", y: 896 },
            { label: "0.00", y: 938 },
          ]}
          minor={[576, 611, 646, 681, 716, 751, 785, 820, 917]}
          verticals={[]}
          bars={bars15}
          hist={hist15}
          curves={[
            { pts: ma15w, color: WHITE },
            { pts: ma15y, color: YELLOW },
            { pts: dif15, color: WHITE },
            { pts: dea15, color: YELLOW },
          ]}
        >
          <path d="M474 847.5H484M478 844 474 847.5 478 851" fill="none" stroke="#d0d0d0" />
          <text x="486" y="853" fill="#c0c0c0">3774.53</text>
          <path d="M1377 544 1381 541V552M1384 543H1389" fill="none" stroke="#c0c0c0" />
          <text x="1390" y="551" fill="#c0c0c0">3949.75</text>
          <rect x="1675" y="945" width="48" height="15" fill="#000080" />
          <path d="M1675 944.5H1723M1675 960.5H1723" stroke={LINE} />
          <text x="1675" y="956" fill="#d0d0d0">-5.3</text>
        </Chart>
        <div className="relative flex h-full flex-col">
          <div className="flex h-[345px] flex-col justify-between">
            <Heading title="上证指数(15分钟.前复权)" ma={["MA17: 3935.82", "MA80: 3899.50"]} />
            <Footer days="27天" left="11分14秒" />
          </div>
          <MacdHeading name="MACD(17,28,9)" dif="8.04" dea="7.08" macd="1.94" />
        </div>
      </div>
      <TimeAxis
        labels={step15}
        first="w-[67px]"
        step="w-[66.4px]"
        period="15分钟"
        cursor={
          <div className="relative -ml-[12px] w-[195px] shrink-0 overflow-hidden bg-[#000080] pl-px leading-[15px] whitespace-nowrap text-[#d0d0e8]">
            25/10/24/五 13:45 4 至今涨幅0.04%
          </div>
        }
      />
      <IndicatorBar />
    </div>
    <Quote />
  </section>
);

// Tapered arrow: thin transparent tail growing into a solid head.
const Arrow = ({ id, x1, y1, x2, y2 }: { id: string; x1: number; y1: number; x2: number; y2: number }) => {
  const len = Math.hypot(x2 - x1, y2 - y1);
  const deg = (Math.atan2(y2 - y1, x2 - x1) * 180) / Math.PI;
  return (
    <g transform={`translate(${x1} ${y1}) rotate(${deg})`}>
      <linearGradient id={id} gradientUnits="userSpaceOnUse" x1="0" y1="0" x2={len} y2="0">
        <stop offset="0" stopColor="#f02414" stopOpacity="0" />
        <stop offset="0.35" stopColor="#f02414" stopOpacity="0.8" />
        <stop offset="0.5" stopColor="#f52414" />
      </linearGradient>
      <path
        d={`M0 -0.4 L${len - 10} -2.8 L${len - 13} -6.5 L${len} 0 L${len - 13} 6.5 L${len - 10} 2.8 L0 0.4Z`}
        fill={`url(#${id})`}
      />
    </g>
  );
};

const Annotations = () => (
  <div className="pointer-events-none absolute inset-0 z-20">
    <svg className="absolute inset-0" width="1923" height="1020" viewBox="0 0 1923 1020">
      <g fill="none" stroke="#ee2618" strokeWidth="3.2" strokeLinejoin="round" strokeLinecap="round">
        <rect x="938" y="10.5" width="443" height="480.5" />
        <rect x="1100.5" y="29.5" width="161.5" height="425.5" />
        <rect x="752" y="532" width="915" height="438" />
        <path d="M1116 57 1139 43 1159 28 1177 12 1185 8 1190 9 1195 15 1198 21 1201 29 1205 38 1212 50 1217 57 1219 70 1224.5 87 1230.6 108 1237 124 1248 146 1262 172 1271 186 1275 198 1286 213 1301 231 1315 253 1319 263 1331 280 1343 298 1354.5 313 1364 323 1371.5 328" />
        <path d="M1123 430 1135 429.500 1144 425 1151 418 1157 415 1161 409 1166 406.500 1188 406.500 1194 410 1205 412 1210 415 1220 417.500 1224 428 1232 437 1240 443 1250 447 1260 451 1266 455 1275 460 1283 461 1297 468 1308 471 1320 475 1329 475.500" />
      </g>
      <Arrow id="a1" x1={608} y1={113} x2={1214} y2={1} />
      <Arrow id="a2" x1={980} y1={353} x2={1292} y2={414} />
      <Arrow id="a3" x1={729} y1={578} x2={1477} y2={537} />
      <Arrow id="a4" x1={772} y1={881} x2={1431} y2={916} />
    </svg>
    <p className="absolute top-[201px] left-[1190px] text-[21px] leading-[30px] whitespace-nowrap text-[#e52a1c]">
      就差这点，除非说周一又暴力拉满
    </p>
    <p className="absolute top-[752px] left-[1414px] text-[21px] leading-[30px] whitespace-nowrap text-[#e52a1c]">
      15分钟里面具备了
    </p>
  </div>
);

export default function App() {
  return (
    <div className={`relative flex h-[1020px] w-[1923px] overflow-hidden bg-black ${FONT}`}>
      <main className="flex w-[1920px] flex-col">
        <div className="h-[2px] shrink-0 border-b border-[#5d6b67] bg-[#e8eceb]" />
        <TabBar />
        <FiveMinute />
        <FifteenMinute />
        <div className="flex h-[2px] bg-[#1a1a1c]">
          <div className="ml-[246px] w-[48px] bg-[#a8683c]" />
          <div className="ml-[99px] w-[46px] bg-[#4a4a4e]" />
        </div>
      </main>
      <div className="w-[3px] border-t border-[#e8eceb] bg-[#3a3a3c]" />
      <Annotations />
    </div>
  );
}
